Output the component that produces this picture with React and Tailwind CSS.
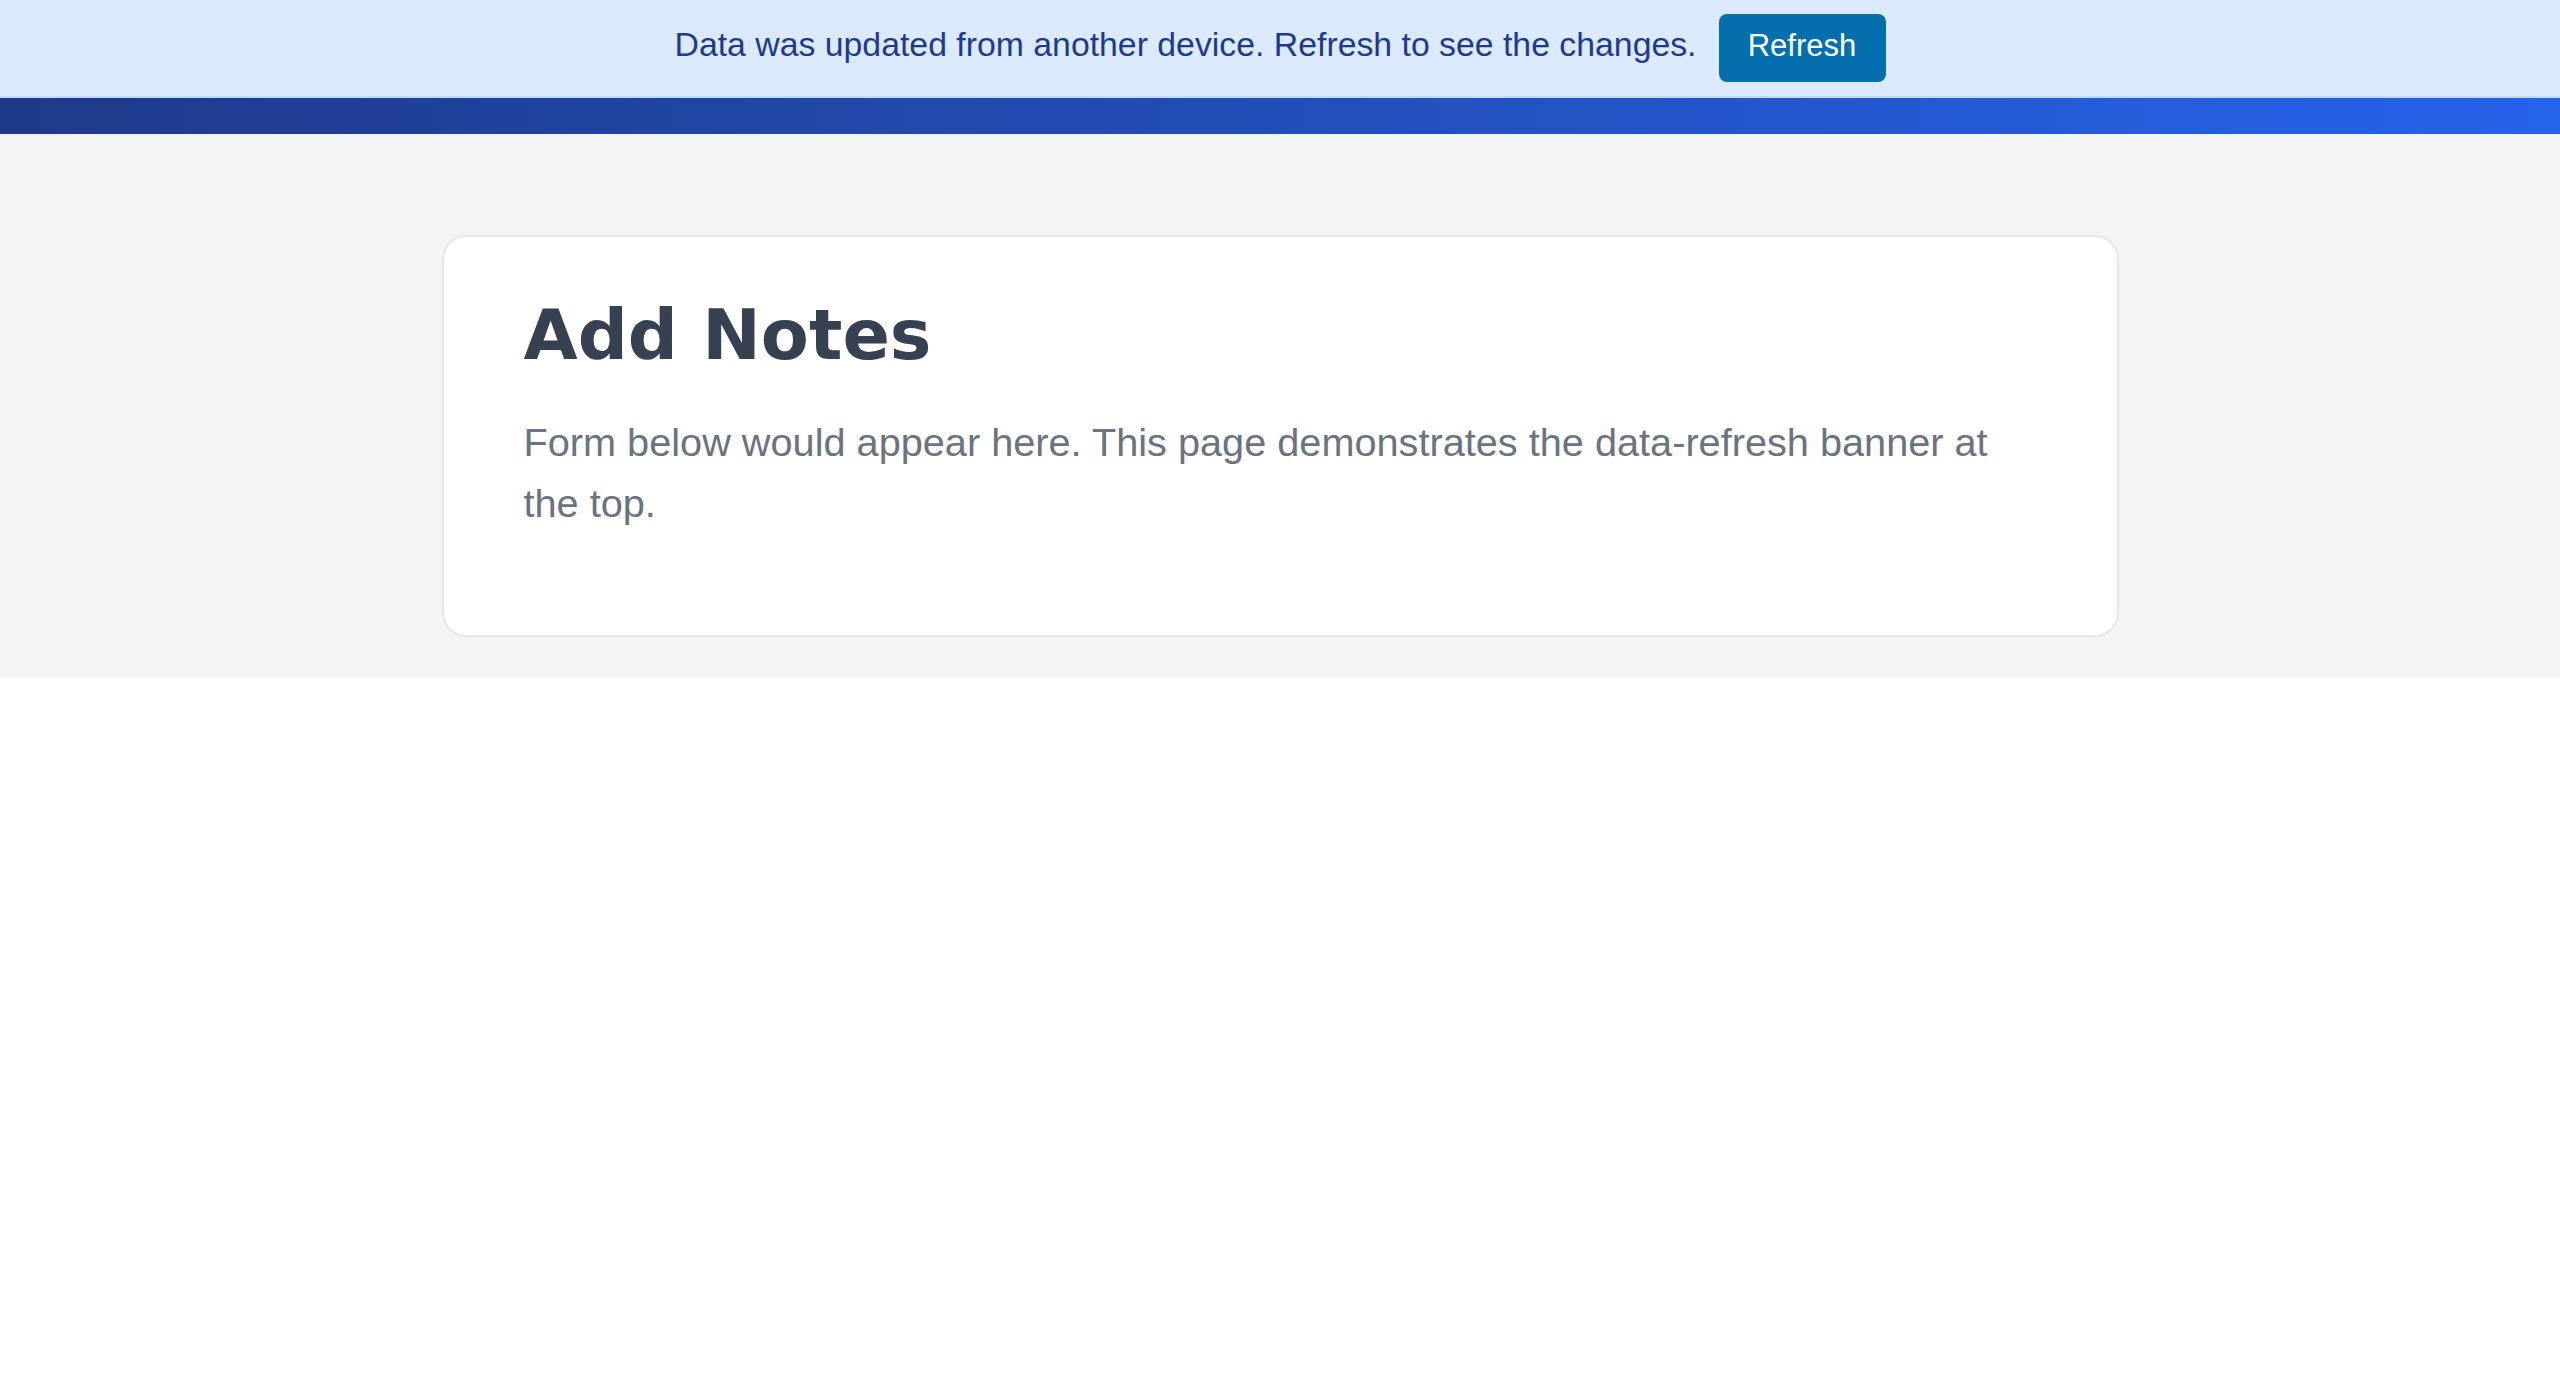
export default function App() {
  return (
    <div className="min-h-[1400px] bg-white font-['Liberation_Sans',Arial,sans-serif]">
      <div className="h-[98px] bg-[#dbeafe] border-b-2 border-[#bfdbfe] flex items-center justify-center gap-[22px]">
        <span className="mb-[6px] text-[33.8px] leading-none text-[#1e3a8a]">
          Data was updated from another device. Refresh to see the changes.
        </span>
        <button className="h-[68px] w-[167px] rounded-[8px] bg-[#0370ad] pb-[5px] text-white text-[31px] leading-none flex items-center justify-center">
          Refresh
        </button>
      </div>
      <div className="h-[36px] bg-gradient-to-r from-[#1e3a8a] to-[#2563eb]" />
      <main className="bg-[#f3f4f6] pt-[101px] pb-[41px]">
        <div className="mx-auto w-[1677px] rounded-[24px] border-2 border-[#e5e7eb] bg-white px-[80px] pt-[62px] pb-[101px]">
          <h1 className="font-['DejaVu_Sans',sans-serif] font-bold text-[70px] leading-[72px] text-[#374151]">
            Add Notes
          </h1>
          <p className="mt-[41px] text-[39.7px] leading-[61px] text-[#6b7280]">
            Form below would appear here. This page demonstrates the data-refresh banner at the top.
          </p>
        </div>
      </main>
    </div>
  );
}
